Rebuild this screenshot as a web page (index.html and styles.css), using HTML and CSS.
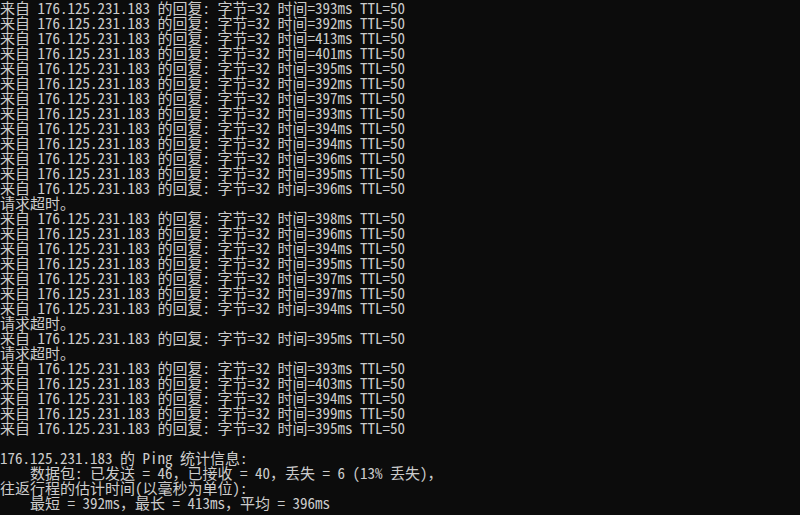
FILE: index.html
```html
<!DOCTYPE html>
<html lang="zh-CN">
<head>
<meta charset="utf-8">
<title>ping</title>
<link rel="stylesheet" href="styles.css">
</head>
<body>
<pre class="console">来自 176.125.231.183 的回复: 字节=32 时间=393ms TTL=50
来自 176.125.231.183 的回复: 字节=32 时间=392ms TTL=50
来自 176.125.231.183 的回复: 字节=32 时间=413ms TTL=50
来自 176.125.231.183 的回复: 字节=32 时间=401ms TTL=50
来自 176.125.231.183 的回复: 字节=32 时间=395ms TTL=50
来自 176.125.231.183 的回复: 字节=32 时间=392ms TTL=50
来自 176.125.231.183 的回复: 字节=32 时间=397ms TTL=50
来自 176.125.231.183 的回复: 字节=32 时间=393ms TTL=50
来自 176.125.231.183 的回复: 字节=32 时间=394ms TTL=50
来自 176.125.231.183 的回复: 字节=32 时间=394ms TTL=50
来自 176.125.231.183 的回复: 字节=32 时间=396ms TTL=50
来自 176.125.231.183 的回复: 字节=32 时间=395ms TTL=50
来自 176.125.231.183 的回复: 字节=32 时间=396ms TTL=50
请求超时。
来自 176.125.231.183 的回复: 字节=32 时间=398ms TTL=50
来自 176.125.231.183 的回复: 字节=32 时间=396ms TTL=50
来自 176.125.231.183 的回复: 字节=32 时间=394ms TTL=50
来自 176.125.231.183 的回复: 字节=32 时间=395ms TTL=50
来自 176.125.231.183 的回复: 字节=32 时间=397ms TTL=50
来自 176.125.231.183 的回复: 字节=32 时间=397ms TTL=50
来自 176.125.231.183 的回复: 字节=32 时间=394ms TTL=50
请求超时。
来自 176.125.231.183 的回复: 字节=32 时间=395ms TTL=50
请求超时。
来自 176.125.231.183 的回复: 字节=32 时间=393ms TTL=50
来自 176.125.231.183 的回复: 字节=32 时间=403ms TTL=50
来自 176.125.231.183 的回复: 字节=32 时间=394ms TTL=50
来自 176.125.231.183 的回复: 字节=32 时间=399ms TTL=50
来自 176.125.231.183 的回复: 字节=32 时间=395ms TTL=50

176.125.231.183 的 Ping 统计信息:
    数据包: 已发送 = 46，已接收 = 40，丢失 = 6 (13% 丢失)，
往返行程的估计时间(以毫秒为单位):
    最短 = 392ms，最长 = 413ms，平均 = 396ms</pre>
</body>
</html>
```
FILE: styles.css
```css
html, body {
  margin: 0;
  padding: 0;
  background: #0c0c0c;
  height: 100%;
  overflow: hidden;
}
.console {
  margin: 0;
  padding: 0;
  color: #cccccc;
  font-family: "Noto Sans Mono CJK SC", "Noto Sans CJK SC", monospace;
  font-size: 15px;
  line-height: 15px;
  white-space: pre;
}
```
